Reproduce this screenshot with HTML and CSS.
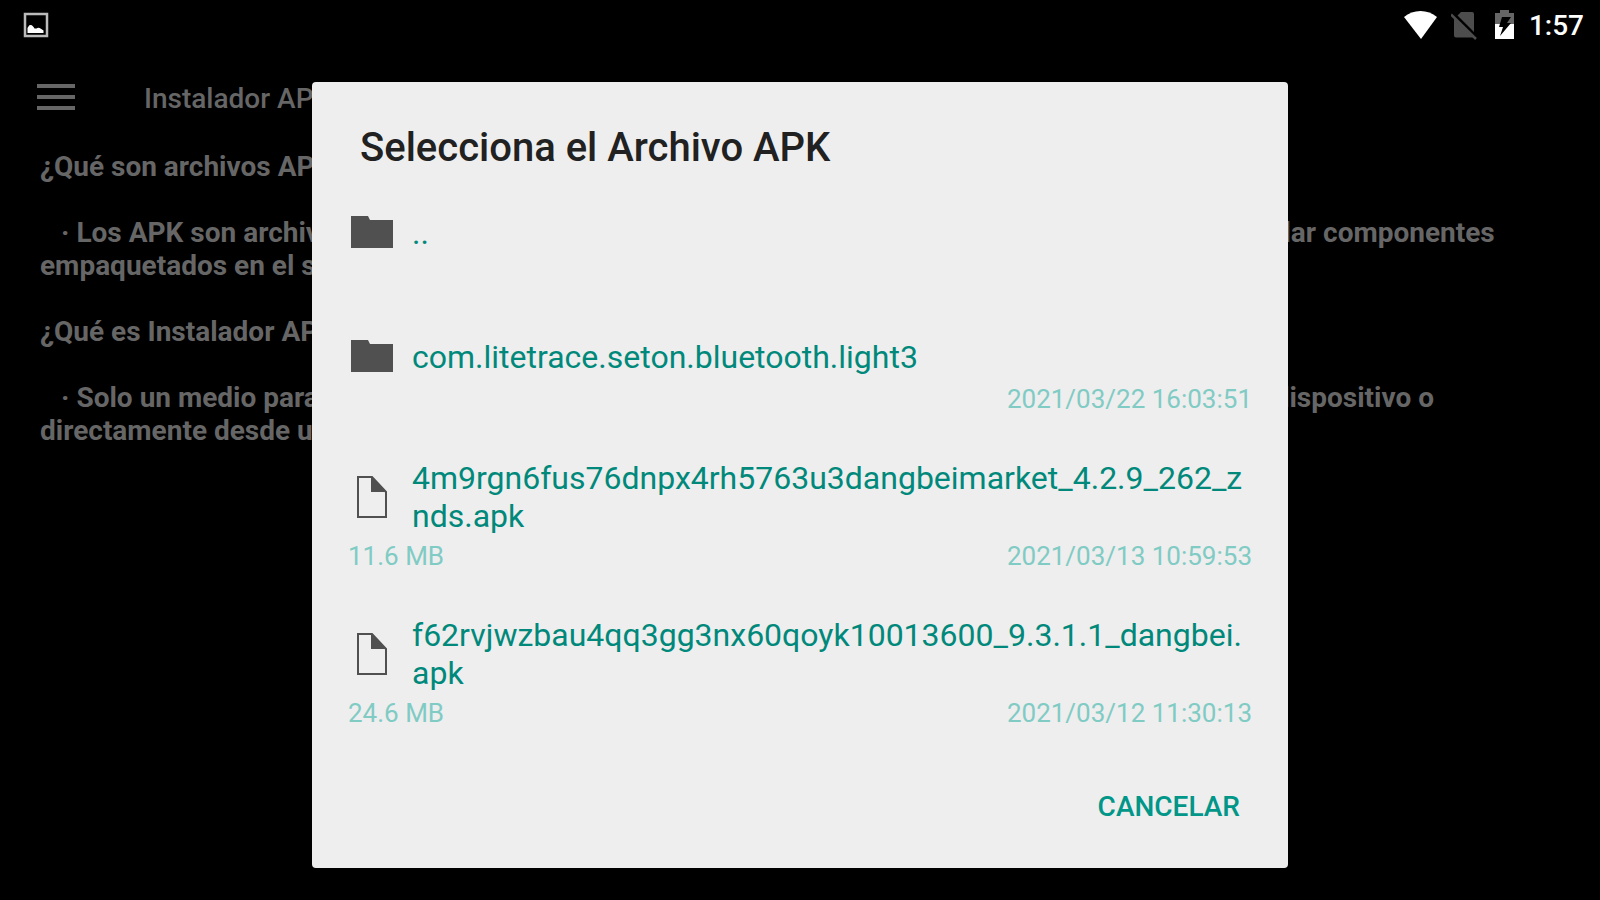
FILE: index.html
```html
<!DOCTYPE html>
<html lang="es">
<head>
    <meta charset="UTF-8">
    <meta name="viewport" content="width=device-width, initial-scale=1.0">
    <title>Instalador APK</title>
    <link rel="stylesheet" href="styles.css">
</head>
<body>

<div class="status-bar">
    <svg class="icon-picture" width="26" height="26" viewBox="0 0 26 26">
        <rect x="2" y="2" width="22" height="22" fill="none" stroke="#bbb" stroke-width="2.5"/>
        <path d="M4.500 21v-5c1-1 1-3 3-3 2 0 3 2 4 3.500h2c1-1 3-1 4 0l3 2v2.500z" fill="#fff"/>
    </svg>
    <div class="status-icons">
        <svg width="38" height="30" viewBox="0 0 38 30">
            <path d="M22 29L5 7C14-1 29-1 38 7z" fill="#fff"/>
        </svg>
        <svg width="30" height="30" viewBox="0 0 30 30">
            <path d="M10 2h11q2 0 2 2v18L6.500 5.500zM3 8l19.500 19.500H5q-2 0-2-2z" fill="#4d4d4d"/>
            <path d="M0 4.500l25 24.500" stroke="#4d4d4d" stroke-width="2.500"/>
        </svg>
        <svg width="20" height="30" viewBox="0 0 20 30">
            <path d="M0 3h5V0h9v3h5v12H0z" fill="#666"/>
            <path d="M0 14h19v15H0z" fill="#fff"/>
            <path d="M7 7h9l-4 6h4L5 26l3-9H4z" fill="#000"/>
        </svg>
        <span class="clock">1:57</span>
    </div>
</div>

<div class="app-bar">
    <button type="button" class="menu-button" aria-label="Menú">
        <span></span>
        <span></span>
        <span></span>
    </button>
    <h1>Instalador APK</h1>
</div>

<div class="content">
    <p>¿Qué son archivos APK?</p>
    <p class="answer">· Los APK son archivos ejecutables y comprimidos de aplicaciones para Android, y permiten instalar componentes empaquetados en el sistema.</p>
    <p>¿Qué es Instalador APK?</p>
    <p class="answer">· Solo un medio para instalar los archivos APK que ya se encuentran en la memoria interna de tu dispositivo o directamente desde una memoria USB.</p>
</div>

<div class="overlay">
    <div class="dialog" role="dialog" aria-labelledby="dialogTitle">
        <h2 id="dialogTitle">Selecciona el Archivo APK</h2>
        <ul class="file-list">
            <li>
                <button type="button" class="file">
                    <span class="file-head">
                        <svg width="48" height="43" viewBox="0 0 48 43">
                            <path d="M3 5h17l2 4h23v28H3z" fill="#505050"/>
                        </svg>
                        <span class="file-name">..</span>
                    </span>
                    <span class="file-info"></span>
                </button>
            </li>
            <li>
                <button type="button" class="file">
                    <span class="file-head">
                        <svg width="48" height="43" viewBox="0 0 48 43">
                            <path d="M3 5h17l2 4h23v28H3z" fill="#505050"/>
                        </svg>
                        <span class="file-name">com.litetrace.seton.bluetooth.light3</span>
                    </span>
                    <span class="file-info">
                        <span></span>
                        <span>2021/03/22 16:03:51</span>
                    </span>
                </button>
            </li>
            <li>
                <button type="button" class="file">
                    <span class="file-head">
                        <svg width="48" height="43" viewBox="0 0 48 43">
                            <path d="M10 1h14l14 15v25H10z" fill="none" stroke="#505050" stroke-width="2"/>
                            <path d="M23 1h1l14 15H23z" fill="#505050"/>
                        </svg>
                        <span class="file-name">4m9rgn6fus76dnpx4rh5763u3dangbeimarket_4.2.9_262_znds.apk</span>
                    </span>
                    <span class="file-info">
                        <span>11.6 MB</span>
                        <span>2021/03/13 10:59:53</span>
                    </span>
                </button>
            </li>
            <li>
                <button type="button" class="file">
                    <span class="file-head">
                        <svg width="48" height="43" viewBox="0 0 48 43">
                            <path d="M10 1h14l14 15v25H10z" fill="none" stroke="#505050" stroke-width="2"/>
                            <path d="M23 1h1l14 15H23z" fill="#505050"/>
                        </svg>
                        <span class="file-name">f62rvjwzbau4qq3gg3nx60qoyk10013600_9.3.1.1_dangbei.apk</span>
                    </span>
                    <span class="file-info">
                        <span>24.6 MB</span>
                        <span>2021/03/12 11:30:13</span>
                    </span>
                </button>
            </li>
        </ul>
        <div class="dialog-actions">
            <button type="button" class="cancel-button">CANCELAR</button>
        </div>
    </div>
</div>

</body>
</html>
```
FILE: styles.css
```css
* {
    box-sizing: border-box;
}
body {
    font-family: Roboto, "Noto Sans", sans-serif;
    font-size: 28px;
    line-height: 33px;
    background-color: #000;
    color: #666;
    margin: 0;
    min-height: 100vh;
}
button {
    font: inherit;
    color: inherit;
    background: none;
    border: none;
    padding: 0;
    cursor: pointer;
}
svg {
    display: block;
    flex-shrink: 0;
}
.status-bar {
    display: flex;
    justify-content: space-between;
    align-items: center;
    height: 50px;
    padding: 0 16px 0 23px;
}
.status-icons {
    display: flex;
    align-items: center;
    gap: 14px;
}
.clock {
    color: #fff;
    font-weight: 500;
}
.app-bar {
    display: flex;
    align-items: flex-start;
    gap: 69px;
    height: 100px;
    padding: 32px 37px 0;
}
.menu-button {
    display: flex;
    flex-direction: column;
    gap: 7px;
    width: 38px;
    padding: 2px 0;
}
.menu-button span {
    height: 4px;
    background-color: #666;
}
.app-bar h1 {
    margin: 0;
    font-size: 28px;
    font-weight: 500;
}
.content {
    padding: 0 40px;
    font-weight: bold;
}
.content p {
    margin: 0 0 33px;
}
.content .answer {
    text-indent: 21px;
}

/* file picker */
.overlay {
    position: fixed;
    top: 50px;
    right: 0;
    bottom: 0;
    left: 0;
    display: flex;
    justify-content: center;
    align-items: center;
}
.dialog {
    width: 61%;
    background-color: #eee;
    border-radius: 4px;
    padding: 42px 0 26px;
}
.dialog h2 {
    margin: 0 48px 17px;
    color: #212121;
    font-size: 40px;
    font-weight: 500;
    line-height: 48px;
}
.file-list {
    list-style: none;
    margin: 0;
    padding: 0;
}
.file {
    display: block;
    width: 100%;
    padding: 22px 36px;
    text-align: left;
}
.file-head {
    display: flex;
    align-items: center;
    gap: 16px;
    min-height: 43px;
}
.file-name {
    color: #00897b;
    font-size: 32px;
    line-height: 38px;
    word-break: break-all;
}
.file-info {
    display: flex;
    justify-content: space-between;
    min-height: 31px;
    margin-top: 6px;
    color: #80cbc4;
    font-size: 26px;
    line-height: 31px;
}
.dialog-actions {
    display: flex;
    justify-content: flex-end;
    padding: 19px 32px 0;
}
.cancel-button {
    height: 72px;
    padding: 0 16px;
    color: #009688;
    font-weight: 500;
}
```
